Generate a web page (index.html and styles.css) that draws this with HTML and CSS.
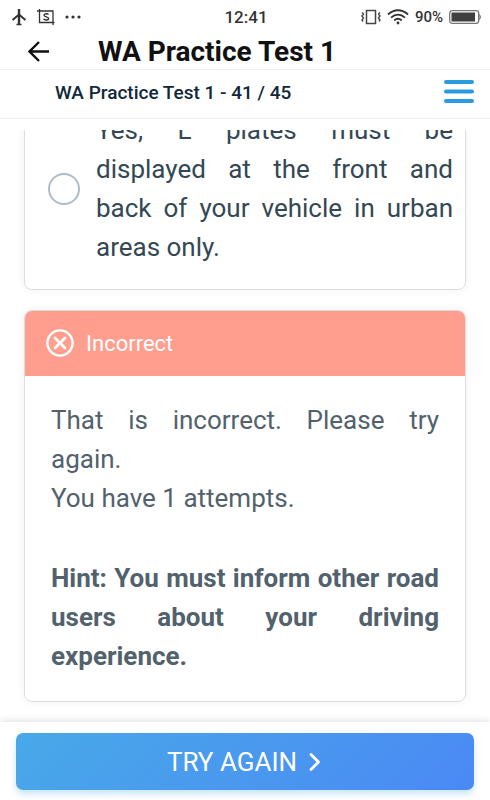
FILE: index.html
```html
<!DOCTYPE html>
<html lang="en">
<head>
<title>WA Practice Test 1</title>
<meta charset="utf-8">
<meta name="viewport" content="width=device-width, initial-scale=1">
<link rel="stylesheet" href="styles.css">
</head>
<body>

<div class="status_bar">
  <div class="status_group status_left">
    <svg width="16" height="18" viewBox="0 0 16 18" fill="none" stroke="#333">
      <path d="M8 1v15" stroke-width="2.4"/>
      <path d="M7.500 7L1.500 12M8.500 7l6 5" stroke-width="2"/>
      <path d="M5.500 16.500h5" stroke-width="1.500"/>
    </svg>
    <svg width="18" height="18" viewBox="0 0 18 18" fill="none" stroke="#333">
      <path d="M0 3h16v12M2.500 1v13.500h15M16 14.500V17" stroke-width="1.300"/>
      <path d="M11.500 6.500C11 5.600 7 5.300 7 7.300S11.600 8.400 11.600 10.400 7.300 12.400 6.700 10.700" stroke-width="1.400"/>
    </svg>
    <svg width="16" height="18" viewBox="0 0 16 18" fill="#333">
      <circle cx="2" cy="9" r="1.600"/><circle cx="8" cy="9" r="1.600"/><circle cx="14" cy="9" r="1.600"/>
    </svg>
  </div>
  <span class="clock">12:41</span>
  <div class="status_group status_right">
    <svg width="20" height="16" viewBox="0 0 20 16" fill="none" stroke="#444">
      <rect x="5.500" y="1.500" width="9" height="13" stroke-width="1.500"/>
      <path d="M1 3.500l1.500 1.500L1 7l1.500 2L1 11l1 1.500M19 3.500L17.500 5 19 7l-1.500 2 1.500 2-1 1.500" stroke-width="1.400"/>
    </svg>
    <svg width="22" height="16" viewBox="0 0 22 16" fill="none" stroke="#333" stroke-width="1.800">
      <path d="M1 5.500C7-.2 15-.2 21 5.500M4 8.700c4.300-4 9.700-4 14 0M7.200 11.500c2.400-2.200 5.200-2.200 7.600 0"/>
      <circle cx="11" cy="14" r="1.400" fill="#333" stroke="none"/>
    </svg>
    <span class="battery_level">90%</span>
    <svg width="32" height="14" viewBox="0 0 32 14">
      <rect x=".7" y=".7" width="29" height="12.600" rx="2.500" fill="#fff" stroke="#777" stroke-width="1.300"/>
      <rect x="2.500" y="2.500" width="23.500" height="9" fill="#404040"/>
      <path d="M30.500 4.500q2 2.500 0 5" fill="#777" stroke="#777"/>
    </svg>
  </div>
</div>

<header class="title_bar">
  <button class="back" aria-label="Back">
    <svg width="22" height="22" viewBox="0 0 22 22" fill="none" stroke="#111" stroke-width="2.400">
      <path d="M21 10.500H1.500M11 1L1.500 10.500l9.500 9.500"/>
    </svg>
  </button>
  <h1>WA Practice Test 1</h1>
</header>

<div class="progress_bar">
  <h2>WA Practice Test 1 - 41 / 45</h2>
  <button class="menu" aria-label="Menu">
    <svg width="30" height="24" viewBox="0 0 30 24" stroke="#2b9be0" stroke-width="4" stroke-linecap="round">
      <path d="M2 2h26M2 11.500h26M2 21h26"/>
    </svg>
  </button>
</div>

<main>
  <div class="card">
    <label class="option">
      <input type="radio" name="answer">
      <span>Yes, L plates must be displayed at the front and back&nbsp;of your vehicle in urban areas&nbsp;only.</span>
    </label>
  </div>

  <section class="card">
    <div class="result">
      <svg width="28" height="28" viewBox="0 0 28 28" fill="none" stroke="#fff" stroke-width="2.400">
        <circle cx="14" cy="14" r="12.600"/>
        <path d="M9 9l10 10M19 9L9 19" stroke-width="2.800" stroke-linecap="round"/>
      </svg>
      <h3>Incorrect</h3>
    </div>
    <div class="feedback">
      <p>That is incorrect. Please try again.<br>You have 1 attempts.</p>
      <p class="hint">Hint: You must inform other road users about your driving experience.</p>
    </div>
  </section>
</main>

<footer>
  <button class="try_again">
    TRY AGAIN
    <svg width="14" height="20" viewBox="0 0 14 20" fill="none" stroke="#fff" stroke-width="2.800" stroke-linecap="round" stroke-linejoin="round">
      <path d="M2 2.500l7.500 7.500L2 17.500"/>
    </svg>
  </button>
</footer>

</body>
</html>
```
FILE: styles.css
```css
* {
  box-sizing: border-box;
}
body {
  margin: 0;
  height: 100vh;
  display: flex;
  flex-direction: column;
  font-family: Roboto, "Liberation Sans", sans-serif;
  background: #fff;
  color: #334854;
}
h1, h2, h3, p {
  margin: 0;
}
button {
  border: none;
  padding: 0;
  background: none;
  font: inherit;
  cursor: pointer;
}
svg {
  display: block;
  flex: none;
}
.status_bar {
  display: grid;
  grid-template-columns: 1fr auto 1fr;
  align-items: center;
  height: 34px;
  padding: 0 9px 0 11px;
  color: #333;
  font-weight: 500;
}
.status_group {
  display: flex;
  align-items: center;
  gap: 6px;
}
.status_left {
  gap: 10px;
}
.status_right {
  justify-content: flex-end;
}
.clock {
  font-size: 17px;
}
.battery_level {
  font-size: 15px;
}
.title_bar {
  display: flex;
  align-items: center;
  gap: 48px;
  height: 36px;
  padding: 0 28px;
  border-bottom: 1px solid #eee;
}
.title_bar h1 {
  font-size: 28px;
  font-weight: 700;
  line-height: 36px;
  color: #111;
}
.progress_bar {
  display: flex;
  align-items: center;
  justify-content: space-between;
  height: 49px;
  padding: 0 16px 4px 55px;
  border-bottom: 1px solid #eee;
}
.progress_bar h2 {
  font-size: 19px;
  font-weight: 500;
  color: #10283a;
}
main {
  flex: 1;
  min-height: 0;
  display: flex;
  flex-direction: column;
  justify-content: flex-end;
  gap: 20px;
  margin-top: 11px;
  padding: 0 24px 20px;
  overflow: hidden;
}
.card {
  flex: none;
  border: 1px solid #ddd;
  border-radius: 8px;
  box-shadow: 0 0 8px rgba(0, 0, 0, .06);
  overflow: hidden;
}
.option {
  display: flex;
  align-items: center;
  gap: 16px;
  padding: 22px 12px 22px 23px;
  font-size: 26px;
  line-height: 39px;
  text-align: justify;
}
.option input {
  flex: none;
  appearance: none;
  width: 32px;
  height: 32px;
  margin: 0;
  border: 2px solid #b0bcc4;
  border-radius: 50%;
}
.option input:checked {
  background: #2b9be0;
}
.result {
  display: flex;
  align-items: center;
  gap: 12px;
  height: 66px;
  /* cover the card border */
  margin: -1px -1px 0;
  padding: 0 22px;
  background: #ff9d8e;
  color: #fff;
}
.result h3 {
  font-size: 22px;
  font-weight: 400;
}
.feedback {
  padding: 25px 26px;
  font-size: 26px;
  line-height: 39px;
  text-align: justify;
  color: #52626d;
}
.hint {
  margin-top: 41px;
  font-weight: 700;
}
footer {
  padding: 11px 16px 10px;
  background: #fff;
  box-shadow: 0 -2px 6px rgba(0, 0, 0, .1);
}
.try_again {
  display: flex;
  align-items: center;
  justify-content: center;
  gap: 12px;
  width: 100%;
  height: 57px;
  border-radius: 7px;
  background: linear-gradient(135deg, #48a9e8, #4b89f5);
  box-shadow: 0 4px 6px rgba(72, 169, 232, .3);
  color: #fff;
  font-size: 26px;
}
```
